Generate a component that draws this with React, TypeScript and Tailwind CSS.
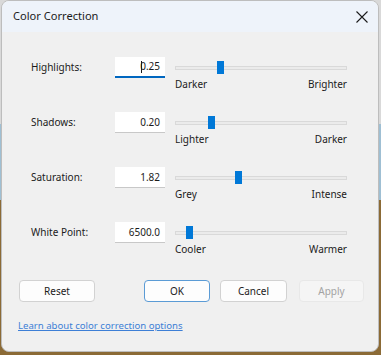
interface SliderRow {
  label: string;
  value: string;
  min: string;
  max: string;
  thumb: number; // px offset of thumb inside track
  focused?: boolean;
}

const rows: SliderRow[] = [
  { label: "Highlights:", value: "0.25", min: "Darker", max: "Brighter", thumb: 42, focused: true },
  { label: "Shadows:", value: "0.20", min: "Lighter", max: "Darker", thumb: 33 },
  { label: "Saturation:", value: "1.82", min: "Grey", max: "Intense", thumb: 60 },
  { label: "White Point:", value: "6500.0", min: "Cooler", max: "Warmer", thumb: 11 },
];

const Row = ({ row }: { row: SliderRow }) => (
  <div className="flex items-start h-[55px]">
    <div className="w-[84px] h-[21px] flex items-center text-[10px] text-[#1b1b1b]">{row.label}</div>
    <div
      className={`relative w-[50px] h-[21px] bg-white flex items-center justify-end pr-[5px] text-[10px] text-[#1b1b1b] border-b ${
        row.focused ? "border-b-2 border-[#0067c0]" : "border-[#c8c8c8]"
      }`}
    >
      {row.focused && <span className="absolute left-[26px] top-[4px] w-px h-[12px] bg-[#1b1b1b]" />}
      {row.value}
    </div>
    <div className="ml-[10px] w-[172px] flex flex-col">
      <div className="relative h-[13px] mt-[4px]">
        <div className="absolute left-0 right-0 top-[5px] h-[4px] bg-[#ebebeb] border border-[#d9d9d9]" />
        <div className="absolute top-0 w-[7px] h-[13px] bg-[#0078d7]" style={{ left: row.thumb }} />
      </div>
      <div className="flex justify-between mt-[2px] text-[10px] text-[#1b1b1b] leading-[16px]">
        <span>{row.min}</span>
        <span>{row.max}</span>
      </div>
    </div>
  </div>
);

export default function App() {
  return (
    <div
      className="w-[381px] h-[355px] bg-[linear-gradient(to_bottom,#d9d9d9_0,#d9d9d9_124px,#9fbfd3_124px,#9fbfd3_200px,#8b6a36_200px)]"
      style={{ fontFamily: '"Noto Sans", "Segoe UI", sans-serif' }}
    >
      <div className="ml-px w-[378px] h-[352px] rounded-lg border border-[#bdbdbd] bg-[#f0f0f0] overflow-hidden flex flex-col">
        {/* Title bar */}
        <div className="h-[31px] bg-[#eef3fa] flex items-center justify-between pl-[11px] pr-[9px]">
          <span className="text-[11.1px] text-[#1b1b1b]">Color Correction</span>
          <svg width="12" height="12" viewBox="0 0 12 12" className="mr-px">
            <path d="M0.5 0.5 L11.5 11.5 M11.5 0.5 L0.5 11.5" stroke="#1b1b1b" strokeWidth="1.1" fill="none" />
          </svg>
        </div>

        {/* Sliders */}
        <div className="pt-[25px] pl-[29px] flex flex-col">
          {rows.map((r) => (
            <Row key={r.label} row={r} />
          ))}
        </div>

        {/* Buttons */}
        <div className="flex items-center mt-[3px] pl-[17px] text-[10px]">
          <button className="w-[76px] h-[22px] rounded-[4px] bg-[#fdfdfd] border border-[#d2d2d2] text-[#1b1b1b]">
            Reset
          </button>
          <button className="ml-[49px] w-[66px] h-[22px] rounded-[4px] bg-[#fdfdfd] border border-[#5b9bd5] text-[#1b1b1b]">
            OK
          </button>
          <button className="ml-[10px] w-[67px] h-[22px] rounded-[4px] bg-[#fdfdfd] border border-[#d2d2d2] text-[#1b1b1b]">
            Cancel
          </button>
          <button className="ml-[12px] w-[65px] h-[22px] rounded-[4px] bg-[#f5f5f5] border border-[#e8e8e8] text-[#a3a3a3]">
            Apply
          </button>
        </div>

        <a className="ml-[16px] mt-[17px] text-[9.6px] text-[#3d7fd6] underline w-fit" href="#">
          Learn about color correction options
        </a>
      </div>
    </div>
  );
}
